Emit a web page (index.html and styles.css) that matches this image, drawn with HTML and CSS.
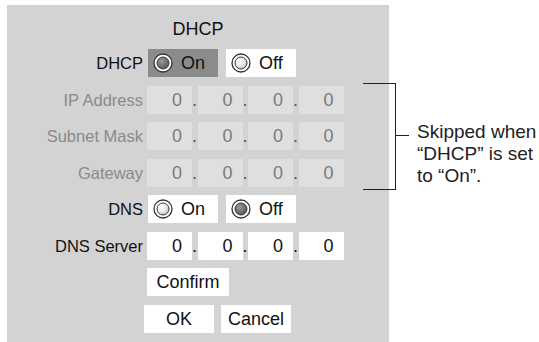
FILE: index.html
```
<!DOCTYPE html>
<html lang="en">
<head>
<meta charset="UTF-8">
<title>DHCP</title>
<link rel="stylesheet" href="styles.css">
</head>
<body>
<div class="page">
  <div class="panel">
    <div class="title">DHCP</div>
    <div class="form">
      <div class="label">DHCP</div>
      <div class="radios">
        <div class="radio focus">
          <svg class="dot-icon" width="20" height="20" viewBox="0 0 20 20"><circle cx="10" cy="10" r="9" fill="#fff" stroke="#333" stroke-width="1.3"/><circle cx="10" cy="10" r="6" fill="url(#on)" stroke="#3a3a3a" stroke-width="1"/></svg>
          <span>On</span>
        </div>
        <div class="radio">
          <svg class="dot-icon" width="20" height="20" viewBox="0 0 20 20"><circle cx="10" cy="10" r="9" fill="#fff" stroke="#333" stroke-width="1.3"/><circle cx="10" cy="10" r="6" fill="url(#off)" stroke="#3a3a3a" stroke-width="1"/></svg>
          <span>Off</span>
        </div>
      </div>

      <div class="label dim">IP Address</div>
      <div class="ip dim">
        <span class="field">0</span><span class="sep">.</span><span class="field">0</span><span class="sep">.</span><span class="field">0</span><span class="sep">.</span><span class="field">0</span>
      </div>

      <div class="label dim">Subnet Mask</div>
      <div class="ip dim">
        <span class="field">0</span><span class="sep">.</span><span class="field">0</span><span class="sep">.</span><span class="field">0</span><span class="sep">.</span><span class="field">0</span>
      </div>

      <div class="label dim">Gateway</div>
      <div class="ip dim">
        <span class="field">0</span><span class="sep">.</span><span class="field">0</span><span class="sep">.</span><span class="field">0</span><span class="sep">.</span><span class="field">0</span>
      </div>

      <div class="label">DNS</div>
      <div class="radios">
        <div class="radio">
          <svg class="dot-icon" width="20" height="20" viewBox="0 0 20 20"><circle cx="10" cy="10" r="9" fill="#fff" stroke="#333" stroke-width="1.3"/><circle cx="10" cy="10" r="6" fill="url(#off)" stroke="#3a3a3a" stroke-width="1"/></svg>
          <span>On</span>
        </div>
        <div class="radio">
          <svg class="dot-icon" width="20" height="20" viewBox="0 0 20 20"><circle cx="10" cy="10" r="9" fill="#fff" stroke="#333" stroke-width="1.3"/><circle cx="10" cy="10" r="6" fill="url(#on)" stroke="#3a3a3a" stroke-width="1"/></svg>
          <span>Off</span>
        </div>
      </div>

      <div class="label">DNS Server</div>
      <div class="ip">
        <span class="field">0</span><span class="sep">.</span><span class="field">0</span><span class="sep">.</span><span class="field">0</span><span class="sep">.</span><span class="field">0</span>
      </div>

      <div></div>
      <div class="confirm">Confirm</div>

      <div></div>
      <div class="buttons">
        <div class="btn">OK</div>
        <div class="btn">Cancel</div>
      </div>
    </div>
  </div>

  <div class="note">Skipped when<br>&ldquo;DHCP&rdquo; is set<br>to &ldquo;On&rdquo;.</div>

  <!-- bracket pointing at the three skipped rows -->
  <div class="bracket"></div>
  <div class="tick"></div>
</div>

<svg width="0" height="0" class="defs">
  <defs>
    <radialGradient id="on" cx="0.38" cy="0.35" r="0.7">
      <stop offset="0" stop-color="#9a9a9a"/>
      <stop offset="1" stop-color="#555"/>
    </radialGradient>
    <radialGradient id="off" cx="0.38" cy="0.35" r="0.75">
      <stop offset="0" stop-color="#ffffff"/>
      <stop offset="0.6" stop-color="#e4e4e4"/>
      <stop offset="1" stop-color="#a8a8a8"/>
    </radialGradient>
  </defs>
</svg>
</body>
</html>
```

FILE: styles.css
```
html, body {
  margin: 0;
  padding: 0;
  background: #fff;
  font-family: "Liberation Sans", Arial, sans-serif;
  color: #111;
}

.page {
  position: relative;
  display: flex;
  width: 539px;
  height: 342px;
  overflow: hidden;
}

/* grey settings panel */
.panel {
  width: 382px;
  height: 337px;
  margin: 5px 0 0 7px;
  padding-top: 14px;
  box-sizing: border-box;
  background: #d3d3d3;
}

.title {
  font-size: 18px;
  line-height: 20px;
  text-align: center;
  margin-bottom: 10px;
}

.form {
  display: grid;
  grid-template-columns: 136px auto;
  grid-auto-rows: 28px;
  column-gap: 4px;
  row-gap: 8.5px;
}

.label {
  font-size: 16.5px;
  line-height: 28px;
  text-align: right;
  white-space: nowrap;
}

.label.dim {
  color: #8a8a8a;
}

/* radio pairs */
.radios {
  display: flex;
  gap: 8px;
  margin-left: 1px;
}

.radio {
  width: 70px;
  display: flex;
  align-items: center;
  gap: 8px;
  padding-left: 5px;
  box-sizing: border-box;
  background: #fff;
  font-size: 18px;
}

.radio.focus {
  background: #8b8b8b;
}

.dot-icon {
  display: block;
  flex: none;
}

/* address fields */
.ip {
  display: flex;
  align-items: baseline;
  font-size: 18px;
  line-height: 28px;
}

.field {
  width: 45px;
  height: 28px;
  padding-right: 10px;
  box-sizing: border-box;
  text-align: right;
  background: #fff;
}

.sep {
  width: 5.5px;
  overflow: visible;
}

.ip.dim {
  color: #7a7a7a;
}

.ip.dim .field {
  background: #dfdfdf;
}

.ip.dim .sep {
  color: #555;
}

/* buttons */
.confirm {
  width: 82px;
  background: #fff;
  font-size: 18px;
  line-height: 28px;
  text-align: center;
}

.buttons {
  display: flex;
  gap: 7px;
  margin-left: -3px;
}

.btn {
  width: 70px;
  background: #fff;
  font-size: 18px;
  line-height: 28px;
  text-align: center;
}

/* callout on the right */
.note {
  margin: 121px 0 0 28px;
  font-size: 19px;
  line-height: 22px;
  color: #222;
  white-space: nowrap;
}

.bracket {
  position: absolute;
  left: 363px;
  top: 83px;
  width: 32px;
  height: 105px;
  border: 1px solid #222;
  border-left: none;
}

.tick {
  position: absolute;
  left: 396px;
  top: 135px;
  width: 13px;
  height: 1px;
  background: #222;
}

.defs {
  position: absolute;
}
```
